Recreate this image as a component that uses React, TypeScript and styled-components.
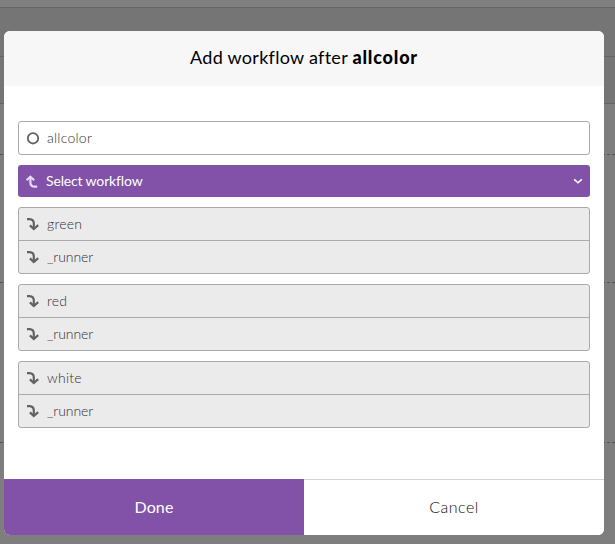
import React from "react";
import styled, { createGlobalStyle } from "styled-components";

const GlobalStyle = createGlobalStyle`
  *, *::before, *::after { box-sizing: border-box; }
  body { margin: 0; overflow: hidden; font-family: Lato, "Liberation Sans", sans-serif; }
  button { font: inherit; border: 0; padding: 0; margin: 0; cursor: pointer; }
`;

const Screen = styled.main`
  position: relative;
  height: 544px;
  overflow: hidden;
  background: #7e7e7e;
`;

const Band = styled.div<{ $height: number; $color?: string; $dashed?: boolean }>`
  height: ${(p) => p.$height}px;
  background: ${(p) => p.$color ?? "#7e7e7e"};
  border-bottom: 1px ${(p) => (p.$dashed ? "dashed #555" : "solid #646464")};
`;

const Overlay = styled.div`
  position: absolute;
  inset: 0;
  padding: 31px 11px 9px 4px;
`;

const Dialog = styled.section`
  display: flex;
  flex-direction: column;
  height: 504px;
  border-radius: 6px;
  overflow: hidden;
  background: #fff;
`;

const Header = styled.header`
  display: flex;
  align-items: center;
  justify-content: center;
  height: 55px;
  padding-bottom: 3px;
  background: #f7f7f7;
`;

const Title = styled.h1`
  margin: 0;
  font-size: 18px;
  line-height: 24px;
  font-weight: 400;
  letter-spacing: 0.28px;
  color: #000;
  & b {
    font-weight: 900;
    letter-spacing: 0.8px;
  }
`;

const Body = styled.div`
  flex: 1;
  display: flex;
  flex-direction: column;
  gap: 10px;
  padding: 35px 14px 0;
`;

const Group = styled.div<{ $muted?: boolean }>`
  border: 1px solid #aaa;
  border-radius: 3px;
  overflow: hidden;
  background: ${(p) => (p.$muted ? "#ebebeb" : "#fff")};
`;

const Row = styled.div`
  display: flex;
  align-items: center;
  gap: 6px;
  height: 32px;
  padding-left: 7px;
  color: #626262;
  & + & {
    height: 33px;
    border-top: 1px solid #aaa;
  }
`;

const Label = styled.span<{ $spacing?: number }>`
  font-size: 14px;
  line-height: 20px;
  font-weight: 300;
  color: #303030;
  letter-spacing: ${(p) => p.$spacing ?? 0.25}px;
`;

const SelectLabel = styled(Label)`
  color: #fff;
  font-weight: 400;
  margin-left: 1px;
`;

const SelectButton = styled.button`
  display: flex;
  align-items: center;
  gap: 6px;
  height: 32px;
  padding: 0 7px 0 6px;
  border-radius: 3px;
  background: #8252a8;
  color: #fff;
`;

const Icon = styled.svg`
  flex: none;
  width: 15px;
  height: 15px;
  fill: none;
  stroke: currentColor;
  stroke-width: 2.2;
`;

const SelectIcon = styled(Icon)`
  color: #e9d8f6;
`;

const Chevron = styled(Icon)`
  width: 10px;
  height: 10px;
  margin-left: auto;
  stroke-width: 1.6;
`;

const Footer = styled.footer`
  display: flex;
  height: 56px;
`;

const FooterButton = styled.button<{ $primary?: boolean }>`
  flex: 1;
  padding-bottom: 2px;
  border-top: 1px solid ${(p) => (p.$primary ? "#8252a8" : "#d3d3d3")};
  background: ${(p) => (p.$primary ? "#8252a8" : "#fff")};
  color: ${(p) => (p.$primary ? "#fff" : "#101010")};
  font-size: 16px;
  font-weight: ${(p) => (p.$primary ? 400 : 300)};
  letter-spacing: ${(p) => (p.$primary ? 0.1 : 0.5)}px;
`;

const DownArrow = () => (
  <Icon viewBox="0 0 15 15">
    <path d="M1 2.2H3.6Q7.8 2.4 7.8 6.5V12" />
    <path d="M3.9 8.4L7.8 12L12.2 8.2" />
  </Icon>
);

const workflows = ["green", "red", "white"];

export default function App() {
  return (
    <Screen>
      <GlobalStyle />
      <Band $height={8} $color="#808080" />
      <Band $height={49} $color="#757575" />
      <Band $height={47} $color="#757575" />
      <Band $height={51} $dashed />
      <Band $height={128} $dashed />
      <Band $height={160} $dashed />
      <Overlay>
        <Dialog role="dialog">
          <Header>
            <Title>Add workflow after <b>allcolor</b></Title>
          </Header>
          <Body>
            <Group>
              <Row>
                <Icon viewBox="0 0 15 15"><circle cx="7" cy="7.3" r="5.2" strokeWidth="1.8" /></Icon>
                <Label>allcolor</Label>
              </Row>
            </Group>
            <SelectButton>
              <SelectIcon viewBox="0 0 15 15">
                <path d="M13.2 12.7H11Q6.4 12.7 6.4 8.5V3" />
                <path d="M2.6 6.2L6.4 2.8L10.2 6.2" />
              </SelectIcon>
              <SelectLabel $spacing={-0.15}>Select workflow</SelectLabel>
              <Chevron viewBox="0 0 10 10"><path d="M1.2 3.4L5 6.8L8.8 3.4" /></Chevron>
            </SelectButton>
            {workflows.map((name) => (
              <Group key={name} $muted>
                <Row><DownArrow /><Label>{name}</Label></Row>
                <Row><DownArrow /><Label $spacing={-0.05}>_runner</Label></Row>
              </Group>
            ))}
          </Body>
          <Footer>
            <FooterButton $primary>Done</FooterButton>
            <FooterButton>Cancel</FooterButton>
          </Footer>
        </Dialog>
      </Overlay>
    </Screen>
  );
}
